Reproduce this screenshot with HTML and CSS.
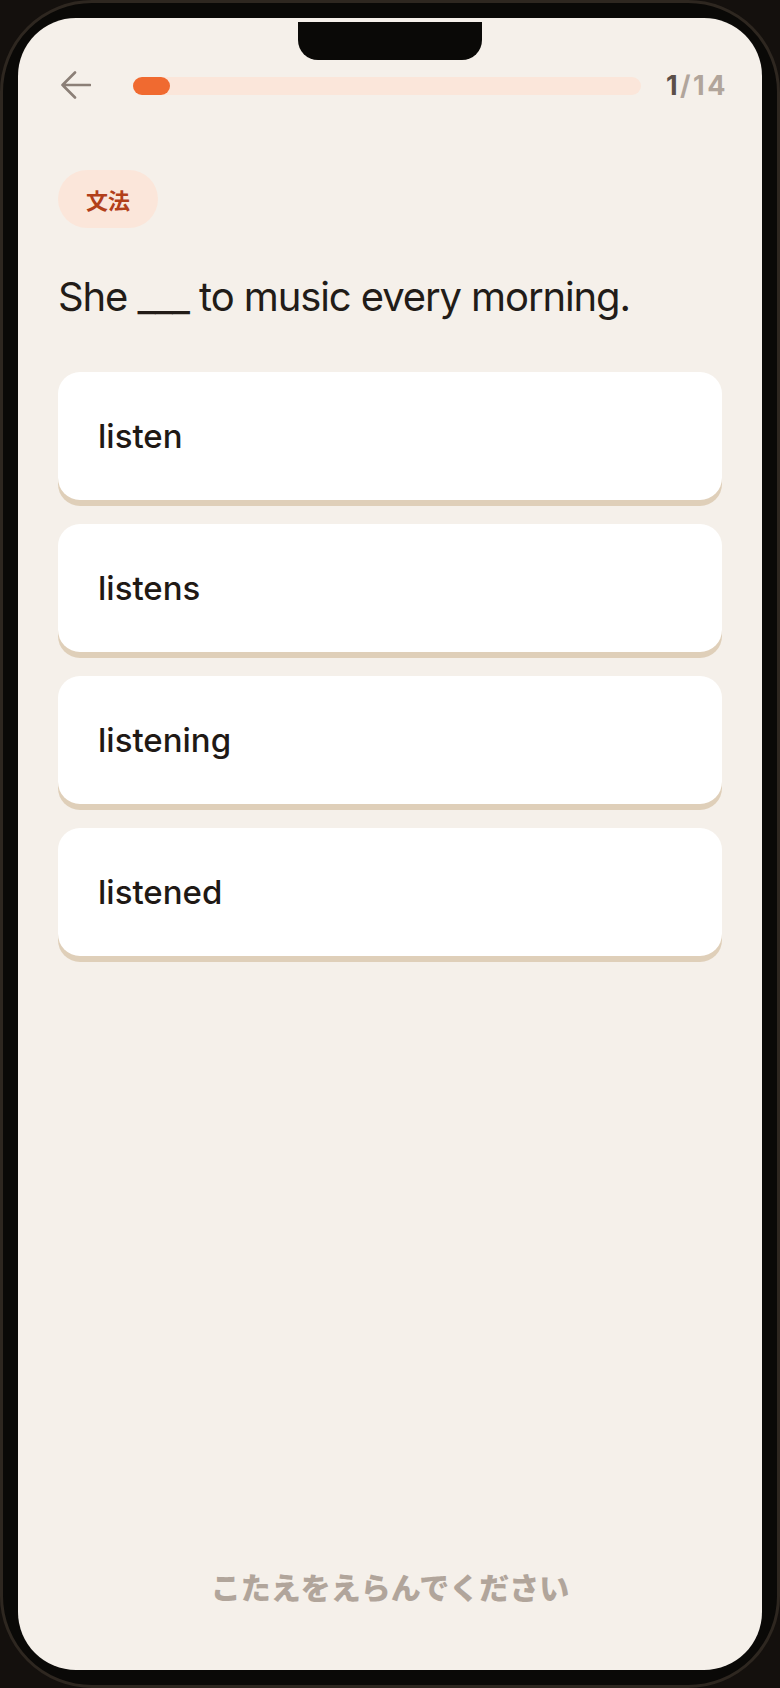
FILE: index.html
```html
<!DOCTYPE html>
<html lang="ja">
  <head>
    <meta charset="UTF-8" />
    <meta name="viewport" content="width=device-width, initial-scale=1.0" />
    <title>Quiz</title>
    <link rel="stylesheet" href="styles.css">
  </head>
  <body>
    <div class="phone">
      <div class="screen">
        <div class="notch"></div>

        <!-- Header -->
        <div class="quiz-header">
          <button class="back-btn" aria-label="back">
            <svg width="30" height="30" viewBox="0 0 30 30">
              <path d="M1.5 14 H29 M14 1.5 L1.5 14 L14 26.5" fill="none" stroke="#8b7f77" stroke-width="2.6" stroke-linecap="round" stroke-linejoin="round" />
            </svg>
          </button>
          <div class="progress">
            <div class="progress-fill" style="width: 7.3%"></div>
          </div>
          <div class="counter"><span class="current">1</span>/14</div>
        </div>

        <!-- Question -->
        <div class="quiz-body">
          <span class="tag">文法</span>
          <h1 class="question">She ___ to music every morning.</h1>

          <div class="choices">
            <button class="choice">listen</button>
            <button class="choice">listens</button>
            <button class="choice">listening</button>
            <button class="choice">listened</button>
          </div>
        </div>

        <p class="hint">こたえをえらんでください</p>
      </div>
    </div>
  </body>
</html>
```

FILE: styles.css
```css
body {
  margin: 0;
  background-color: #14100d;
  font-family: Inter, "Noto Sans CJK JP", sans-serif;
}
.phone {
  width: 780px;
  height: 1688px;
  box-sizing: border-box;
  border: 3px solid #2e2720;
  border-radius: 92px;
  background-color: #0a0907;
  padding: 15px;
}
.screen {
  position: relative;
  height: 100%;
  background-color: #f5f0ea;
  border-radius: 58px;
  display: flex;
  flex-direction: column;
  overflow: hidden;
}
.notch {
  position: absolute;
  top: 4px;
  left: 280px;
  width: 184px;
  height: 38px;
  background-color: #0a0907;
  border-radius: 0 0 20px 20px;
}
.quiz-header {
  display: flex;
  align-items: center;
  padding: 51px 34px 0 43px;
}
.back-btn {
  width: 30px;
  height: 30px;
  padding: 0;
  border: none;
  background: none;
  display: flex;
}
.progress {
  flex: 1;
  height: 18px;
  margin: 0 25px 0 42px;
  background-color: #fbe6da;
  border-radius: 9px;
}
.progress-fill {
  height: 100%;
  background-color: #f06a30;
  border-radius: 9px;
}
.counter {
  font-size: 27px;
  font-weight: 700;
  letter-spacing: 2.5px;
  color: #b1a59b;
}
.counter .current {
  color: #5b4f49;
}
.quiz-body {
  display: flex;
  flex-direction: column;
  align-items: flex-start;
  padding: 68px 40px 0 40px;
}
.tag {
  display: inline-flex;
  align-items: center;
  height: 58px;
  padding: 0 28px;
  border-radius: 29px;
  background-color: #fbe6da;
  color: #b23f1a;
  font-size: 22px;
  font-weight: 700;
}
.question {
  margin: 45px 0 51px 0;
  font-size: 40px;
  font-weight: 400;
  letter-spacing: -1.1px;
  line-height: 1.2;
  color: #221c18;
}
.choices {
  display: flex;
  flex-direction: column;
  gap: 24px;
  width: 100%;
}
.choice {
  height: 128px;
  padding: 0 40px;
  border: none;
  border-radius: 22px;
  background-color: #fff;
  box-shadow: 0 6px 0 #dfcfb9;
  text-align: left;
  font-family: Inter, sans-serif;
  font-size: 33px;
  font-weight: 500;
  color: #1f1915;
}
.hint {
  margin: auto 0 62px 0;
  text-align: center;
  font-size: 30px;
  font-weight: 900;
  color: #b1a59b;
}
```
